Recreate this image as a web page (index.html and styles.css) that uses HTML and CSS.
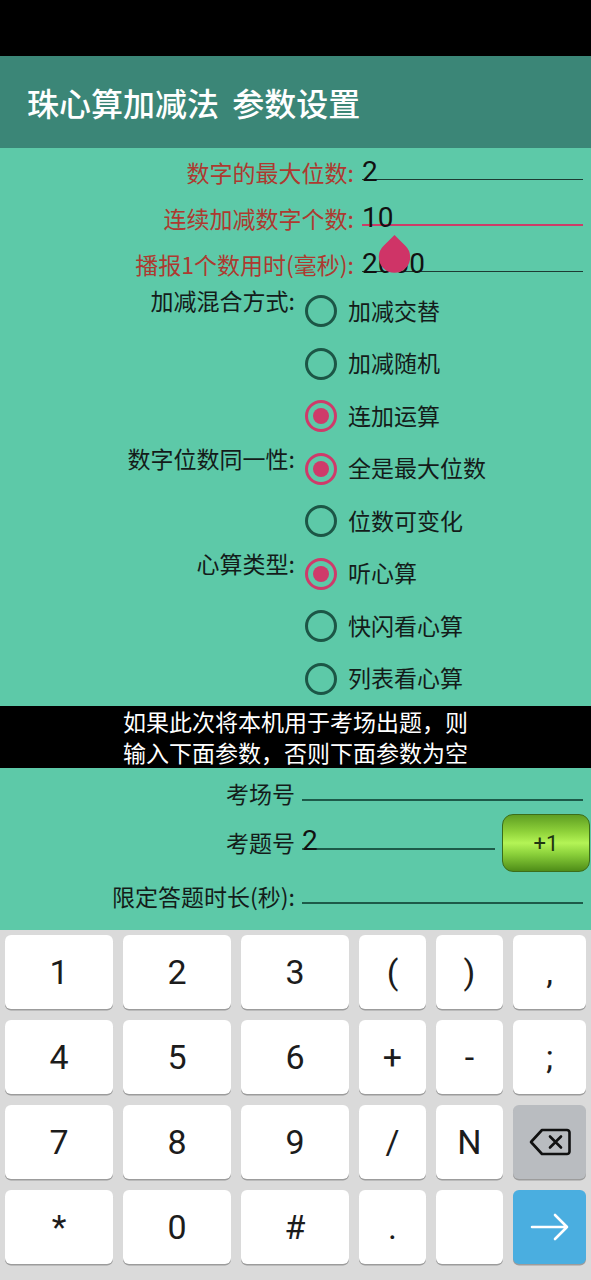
FILE: index.html
```html
<!DOCTYPE html>
<html lang="zh-CN">
<head>
<meta charset="utf-8">
<title>珠心算加减法 参数设置</title>
<link rel="stylesheet" href="styles.css">
</head>
<body>
<div class="screen">
  <div class="statusbar"></div>
  <header class="appbar"><h1 class="title">珠心算加减法 参数设置</h1></header>

  <section class="form">
    <div class="fields">
      <div class="field-row">
        <label class="flabel">数字的最大位数:</label>
        <div class="field"><span class="value">2</span></div>
      </div>
      <div class="field-row">
        <label class="flabel">连续加减数字个数:</label>
        <div class="field focused"><span class="value">10</span></div>
      </div>
      <div class="field-row">
        <label class="flabel">播报1个数用时(毫秒):</label>
        <div class="field"><span class="value">2000</span>
          <svg class="handle" viewBox="0 0 33 40" width="33" height="38"><path d="M16.5 0 L28.17 11.63 A16.5 16.5 0 1 1 4.83 11.63 Z" fill="#cf3467"/></svg>
        </div>
      </div>
    </div>

    <div class="groups">
      <div class="group">
        <div class="glabel">加减混合方式:</div>
        <div class="options">
          <div class="opt"><span class="radio"></span><span class="otext">加减交替</span></div>
          <div class="opt"><span class="radio"></span><span class="otext">加减随机</span></div>
          <div class="opt"><span class="radio on"></span><span class="otext">连加运算</span></div>
        </div>
      </div>
      <div class="group">
        <div class="glabel">数字位数同一性:</div>
        <div class="options">
          <div class="opt"><span class="radio on"></span><span class="otext">全是最大位数</span></div>
          <div class="opt"><span class="radio"></span><span class="otext">位数可变化</span></div>
        </div>
      </div>
      <div class="group">
        <div class="glabel">心算类型:</div>
        <div class="options">
          <div class="opt"><span class="radio on"></span><span class="otext">听心算</span></div>
          <div class="opt"><span class="radio"></span><span class="otext">快闪看心算</span></div>
          <div class="opt"><span class="radio"></span><span class="otext">列表看心算</span></div>
        </div>
      </div>
    </div>
  </section>

  <div class="notice"><p class="nline">如果此次将本机用于考场出题，则</p><p class="nline">输入下面参数，否则下面参数为空</p></div>

  <section class="exam">
    <div class="erow erow-a">
      <label class="elabel">考场号</label>
      <div class="efield"></div>
    </div>
    <div class="erow erow-b">
      <label class="elabel">考题号</label>
      <div class="efield"><span class="value">2</span></div>
      <button class="plus">+1</button>
    </div>
    <div class="erow erow-c">
      <label class="elabel">限定答题时长(秒):</label>
      <div class="efield"></div>
    </div>
  </section>

  <section class="keyboard">
    <div class="key">1</div>
    <div class="key">2</div>
    <div class="key">3</div>
    <div class="key">(</div>
    <div class="key">)</div>
    <div class="key">,</div>
    <div class="key">4</div>
    <div class="key">5</div>
    <div class="key">6</div>
    <div class="key">+</div>
    <div class="key">-</div>
    <div class="key">;</div>
    <div class="key">7</div>
    <div class="key">8</div>
    <div class="key">9</div>
    <div class="key">/</div>
    <div class="key">N</div>
    <div class="key del">
      <svg viewBox="0 0 42 28" width="42" height="28"><path d="M13 2 H38 a2.5 2.5 0 0 1 2.5 2.5 V23.5 a2.5 2.5 0 0 1 -2.5 2.5 H13 L2 14 Z" fill="none" stroke="#111" stroke-width="2.6" stroke-linejoin="round"/><path d="M21 8.5 L32 19.5 M32 8.5 L21 19.5" stroke="#111" stroke-width="2.6" stroke-linecap="round"/></svg>
    </div>
    <div class="key">*</div>
    <div class="key">0</div>
    <div class="key">#</div>
    <div class="key">.</div>
    <div class="key"></div>
    <div class="key enter">
      <svg viewBox="0 0 40 30" width="40" height="30"><path d="M2 15 H37 M25 3 L37 15 L25 27" fill="none" stroke="#fff" stroke-width="2.6" stroke-linecap="round" stroke-linejoin="round"/></svg>
    </div>
  </section>
</div>
</body>
</html>
```

FILE: styles.css
```css
html, body {
  margin: 0;
  padding: 0;
}
body {
  width: 591px;
  font-family: "Noto Sans CJK SC", "Noto Sans", sans-serif;
  color: #1a1a1a;
}
.screen {
  width: 591px;
  height: 1280px;
  overflow: hidden;
  display: flex;
  flex-direction: column;
}
.statusbar {
  height: 56px;
  background: #000;
  flex: none;
}
.appbar {
  height: 92px;
  background: #3b8677;
  display: flex;
  align-items: center;
  padding-left: 27px;
  flex: none;
}
.title {
  margin: 0;
  color: #fff;
  font-size: 32px;
  font-weight: 500;
  line-height: 40px;
  word-spacing: 6px;
}
.form {
  background: #5dc9a8;
  height: 558px;
  flex: none;
}
.field-row {
  display: grid;
  grid-template-columns: 354px 1fr;
  column-gap: 8px;
  padding-right: 8px;
  height: 46px;
  align-items: end;
}
.field-row:first-child {
  height: 32px;
}
.flabel {
  text-align: right;
  font-size: 23px;
  line-height: 26px;
  color: #ad3a30;
  margin-bottom: -5px;
  white-space: nowrap;
}
.field {
  position: relative;
  height: 22px;
  border-bottom: 1px solid #1d3b33;
}
.field.focused {
  height: 21px;
  border-bottom: 2px solid #cc3c68;
}
.value {
  font-family: Roboto, "Noto Sans", sans-serif;
  font-size: 28px;
  line-height: 30px;
  color: #111;
  display: block;
  white-space: nowrap;
}
.handle {
  position: absolute;
  left: 16px;
  top: -14px;
}
.groups {
  padding-top: 13px;
}
.group {
  display: grid;
  grid-template-columns: 295px 1fr;
  column-gap: 10px;
}
.glabel {
  text-align: right;
  font-size: 23px;
  line-height: 26px;
  padding-top: 2px;
  white-space: nowrap;
  color: #141c1a;
}
.opt {
  height: 52.5px;
  display: flex;
  align-items: center;
  gap: 11px;
}
.radio {
  width: 32px;
  height: 32px;
  box-sizing: border-box;
  border: 3px solid #1c5646;
  border-radius: 50%;
  display: flex;
  align-items: center;
  justify-content: center;
  flex: none;
}
.radio.on {
  border-color: #cf3a6a;
}
.radio.on::after {
  content: "";
  width: 16px;
  height: 16px;
  border-radius: 50%;
  background: #cf3a6a;
}
.otext {
  font-size: 23px;
  line-height: 26px;
  color: #141c1a;
  margin-top: -3px;
}
.notice {
  height: 62px;
  background: #000;
  color: #fff;
  font-size: 23px;
  text-align: center;
  box-sizing: border-box;
  flex: none;
  display: flex;
  flex-direction: column;
  justify-content: center;
}
.nline {
  margin: 0;
  line-height: 31px;
  height: 31px;
}
.exam {
  background: #5dc9a8;
  height: 162px;
  box-sizing: border-box;
  flex: none;
}
.erow {
  display: grid;
  grid-template-columns: 295px 1fr;
  column-gap: 7px;
  padding-right: 8px;
  align-items: end;
}
.erow-a { height: 33px; }
.erow-b {
  height: 49px;
  grid-template-columns: 295px 193px 88px;
  padding-right: 1px;
}
.erow-c { height: 54px; }
.elabel {
  text-align: right;
  font-size: 23px;
  line-height: 26px;
  margin-bottom: -5px;
  white-space: nowrap;
  color: #141c1a;
}
.efield {
  height: 22px;
  border-bottom: 2px solid #1d5a49;
}
.plus {
  height: 58px;
  margin-bottom: -22px;
  border: 1px solid #3c6d1a;
  border-radius: 11px;
  background: linear-gradient(to bottom, #5e9e22 0%, #8fd23a 30%, #b4f456 50%, #8ad03a 70%, #4f8d18 100%);
  font-family: Roboto, "Noto Sans", sans-serif;
  font-size: 22px;
  color: #1f3612;
  padding: 0;
}
.keyboard {
  background: #dadada;
  flex: 1;
  display: grid;
  grid-template-columns: 108px 108px 108px 67px 67px 73px;
  grid-auto-rows: 74px;
  gap: 11px 10px;
  padding: 5px 5px 16px;
  align-content: start;
}
.key {
  background: #fff;
  border-radius: 6px;
  box-shadow: 0 1.5px 0 #9c9c9c;
  display: flex;
  align-items: center;
  justify-content: center;
  font-family: Roboto, "Noto Sans", sans-serif;
  font-size: 34px;
  color: #1c1c1c;
}
.key.del {
  background: #b9bcc0;
}
.key.enter {
  background: #4aaee0;
}
```
